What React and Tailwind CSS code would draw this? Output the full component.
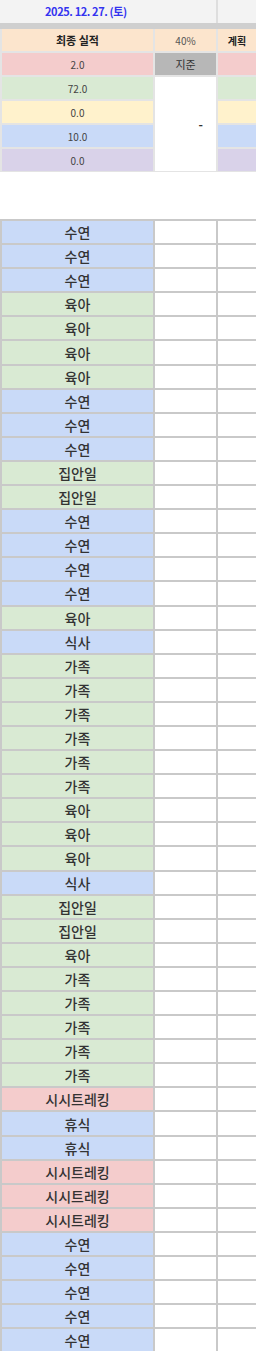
import React from 'react'

const BLUE = 'bg-[#c9daf8]'
const GREEN = 'bg-[#d9ead3]'
const RED = 'bg-[#f4cccc]'

const colorFor = {
  '수연': BLUE,
  '식사': BLUE,
  '휴식': BLUE,
  '육아': GREEN,
  '집안일': GREEN,
  '가족': GREEN,
  '시시트레킹': RED,
}

const rows = [
  '수연', '수연', '수연', '육아', '육아', '육아', '육아', '수연', '수연', '수연',
  '집안일', '집안일', '수연', '수연', '수연', '수연', '육아', '식사',
  '가족', '가족', '가족', '가족', '가족', '가족', '육아', '육아', '육아', '식사',
  '집안일', '집안일', '육아', '가족', '가족', '가족', '가족', '가족',
  '시시트레킹', '휴식', '휴식', '시시트레킹', '시시트레킹', '시시트레킹',
  '수연', '수연', '수연', '수연', '수연',
]

const summary = [
  { value: '2.0', color: 'bg-[#f4cccc]' },
  { value: '72.0', color: 'bg-[#d9ead3]' },
  { value: '0.0', color: 'bg-[#fff2cc]' },
  { value: '10.0', color: 'bg-[#c9daf8]' },
  { value: '0.0', color: 'bg-[#d9d2e9]' },
]

export default function App() {
  return (
    <div className="w-[256px] h-[1356px] overflow-hidden bg-white font-['Noto_Sans_CJK_KR','Noto_Sans',sans-serif]">
      {/* date bar */}
      <div className="flex h-[23px] bg-[#dedede]">
        <div className="flex w-[216px] items-center bg-[#f3f3f3] pl-[45px] text-[11px] font-bold tracking-[-0.4px] text-[#3434f0]">
          2025. 12. 27. (토)
        </div>
        <div className="ml-[2px] flex-1 bg-[#f3f3f3]" />
      </div>
      <div className="h-[6px] bg-[#cfcfcf]" />

      {/* summary table */}
      <div className="grid grid-cols-[151px_61px_38px] auto-rows-[22px] gap-[2px] bg-[#e4e4e4] pl-[2px] pb-[1px] text-[10px] text-[#444]">
        <div className="flex items-center justify-center bg-[#fce5cd] text-[11px] font-bold text-[#222]">최종 실적</div>
        <div className="flex items-center justify-center bg-[#fce5cd] text-[#555]">40%</div>
        <div className="flex items-center justify-center bg-[#fce5cd] text-[10px] font-bold text-[#222]">계획</div>

        <div className={`flex items-center justify-center ${summary[0].color}`}>{summary[0].value}</div>
        <div className="flex items-center justify-center bg-[#b7b7b7] text-[11px] text-[#333]">지준</div>
        <div className={summary[0].color} />

        <div className={`flex items-center justify-center ${summary[1].color}`}>{summary[1].value}</div>
        <div className="row-span-4 flex items-center justify-end bg-white pr-[13px] text-[12px] font-bold text-[#333]">-</div>
        <div className={summary[1].color} />

        {summary.slice(2).map((s, i) => (
          <React.Fragment key={i}>
            <div className={`flex items-center justify-center ${s.color}`}>{s.value}</div>
            <div className={s.color} />
          </React.Fragment>
        ))}
      </div>

      <div className="h-[47px]" />

      {/* activity log */}
      <div className="grid grid-cols-[151px_61px_38px] auto-rows-[22.1px] gap-[2px] bg-[#c9c9c9] pl-[2px] pt-[2px] text-[14px] font-medium text-[#333]">
        {rows.map((r, i) => (
          <React.Fragment key={i}>
            <div className={`flex items-center justify-center leading-none ${colorFor[r]}`}>{r}</div>
            <div className="bg-white" />
            <div className="bg-white" />
          </React.Fragment>
        ))}
      </div>
    </div>
  )
}
